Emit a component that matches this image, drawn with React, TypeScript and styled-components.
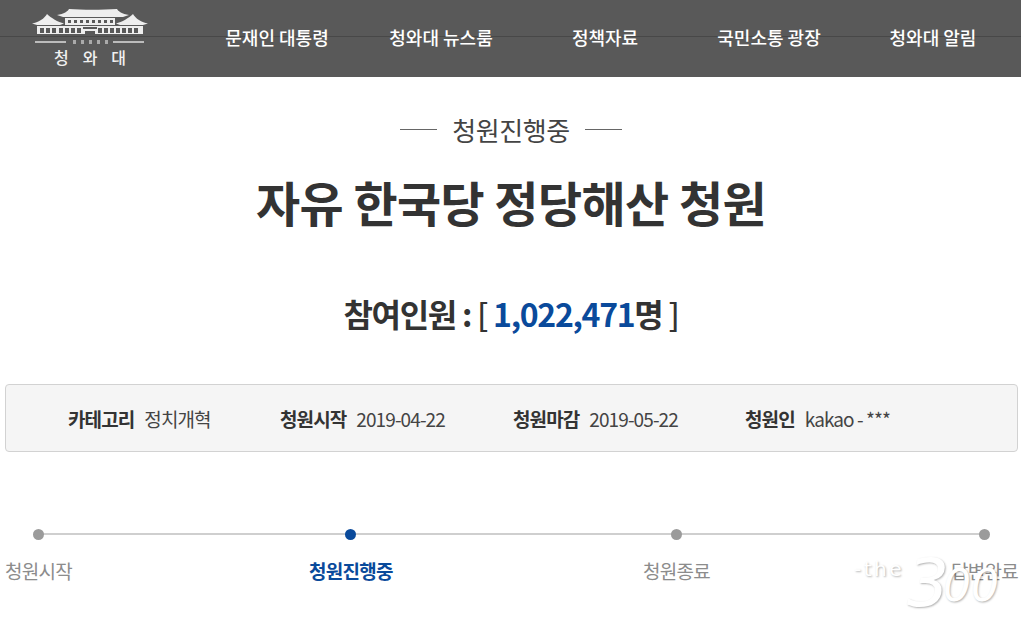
import React from "react";
import styled, { createGlobalStyle } from "styled-components";

const Global = createGlobalStyle`
  html, body { margin: 0; padding: 0; background: #fff; }
  body { font-family: "Noto Sans CJK KR", "Noto Sans", sans-serif; width: 1021px; height: 624px; overflow: hidden; }
`;
const Page = styled.div`position: relative; width: 1021px; height: 624px; overflow: hidden;`;
const Header = styled.header`
  position: relative; height: 77px; background: #595959; display: flex;
`;
const HeaderRule = styled.div`position: absolute; left: 0; right: 0; top: 36px; height: 1px; background: #484848;`;
const LogoBox = styled.div`
  position: relative; width: 195px; flex: none; display: flex; flex-direction: column; align-items: center; padding: 8px 15px 0 0; box-sizing: border-box;
`;
const LogoName = styled.div`
  color: #f0f0f0; font-size: 16px; line-height: 18px; letter-spacing: 14px; margin-right: -14px; font-weight: 500; margin-top: 0;
`;
const Nav = styled.nav`position: relative; display: flex; width: 820px; flex: none;`;
const NavItem = styled.a`
  flex: 1 1 0; text-align: center; color: #fff; font-size: 18px; font-weight: 500; line-height: 75px; white-space: nowrap;
`;
const Status = styled.div`
  display: flex; align-items: center; justify-content: center; gap: 15px; margin-top: 37px; height: 30px; padding-left: 1px;
  color: #444; font-size: 26px; letter-spacing: -0.4px;
`;
const Dash = styled.span`width: 37px; height: 1px; background: #666;`;
const Title = styled.h1`
  margin: 18px 0 0; padding-left: 1px; text-align: center; color: #333; font-size: 48px; line-height: 78px; font-weight: 700; letter-spacing: -0.6px;
`;
const Count = styled.div`
  margin-top: 50px; padding-left: 1px; text-align: center; color: #333; font-size: 32px; line-height: 46px; font-weight: 700; letter-spacing: -1.3px;
`;
const Num = styled.span`color: #0a4a9b;`;
const Plain = styled.span`font-weight: 500;`;
const InfoBox = styled.div`
  margin: 48px 3px 0 5px; height: 68px; box-sizing: border-box; background: #f5f5f5; border: 1px solid #d2d2d2; border-radius: 4px;
  display: flex; align-items: center; padding: 0 0 0 62px;
`;
const Field = styled.div<{ $w: number }>`display: flex; width: ${p => p.$w}px; gap: 10px; font-size: 19px; letter-spacing: -0.9px; color: #444; white-space: nowrap;`;
const FieldLabel = styled.b`font-weight: 700; color: #333;`;
const Steps = styled.div`position: relative; margin-top: 70px; height: 70px;`;
const Track = styled.div`
  margin-left: 33px; width: 957px; height: 25px; display: grid; grid-template-columns: 312px 326px 308px 11px; align-items: center; position: relative;
  &::before { content: ""; position: absolute; left: 5px; right: 5px; top: 11px; height: 2px; background: #cfcfcf; }
`;
const Dot = styled.span<{ $on?: boolean }>`
  position: relative; width: 11px; height: 11px; border-radius: 50%; background: ${p => (p.$on ? "#0a4a9b" : "#9b9b9b")};
`;
const Labels = styled.div`
  margin-top: 11px; padding: 0 3px 0 5px; display: grid; grid-template-columns: 304px 334px 300px 1fr; font-size: 19px; line-height: 26px; letter-spacing: -0.7px; color: #8c8c8c; white-space: nowrap;
`;
const StepLabel = styled.span<{ $on?: boolean; $end?: boolean }>`
  ${p => p.$on && "color:#0a4a9b; font-weight:700;"}
  ${p => p.$end && "text-align:right;"}
`;
const Mark = styled.div`
  position: absolute; left: 854px; top: 548px; width: 165px; height: 70px; color: #fff; font-family: "DejaVu Sans", sans-serif;
  display: flex; align-items: flex-start; text-shadow: 1px 1px 2px rgba(0,0,0,.3); pointer-events: none; white-space: nowrap;
`;
const MarkThe = styled.span`font-size: 20px; line-height: 42px; letter-spacing: 2.5px;`;
const MarkThree = styled.span`font-size: 66px; line-height: 72px; font-style: italic; margin-left: 3px;`;
const MarkZeros = styled.span`font-size: 44px; line-height: 76px; font-style: italic; margin-left: -6px;`;

const Palace = () => (
  <svg width="116" height="27" viewBox="0 0 116 27" fill="none">
    <g fill="#eee">
      <path d="M25 7 C32 6 36 3 37 1 C50 2 70 2 85 1 C86 3 90 6 97 7 L91 9 H31 Z" />
      <path d="M0 15.5 C6 15 13 10 15 6 C19 10 26 14 32 15.5 L28 17 H5 Z" />
      <path d="M84 15.5 C90 14 97 10 101 6 C103 10 110 15 116 15.5 L111 17 H88 Z" />
      <rect x="33" y="10" width="50" height="7" />
      <rect x="5" y="18" width="106" height="8" />
    </g>
    <g fill="#595959">
      {[36, 42, 48, 54, 60, 66, 72, 78].map(x => <rect key={x} x={x} y="12" width="3" height="3" />)}
      {[8, 14, 20, 27, 33, 39, 45, 66, 72, 78, 84, 90, 96, 102].map(x => <rect key={x} x={x} y="20" width="4" height="5" />)}
      <rect x="51" y="19" width="14" height="2" />
      <rect x="53" y="23" width="10" height="3" />
    </g>
  </svg>
);
const LogoLines = () => (
  <svg width="110" height="12" viewBox="0 0 110 12" fill="none" style={{ marginTop: 1 }}>
    <path d="M0 6H31M78 6H109" stroke="#ddd" strokeWidth="1.4" />
    <path d="M38 4h3v4h-3zM46 4h3v4h-3zM54 4h3v4h-3zM62 4h3v4h-3zM70 4h3v4h-3z" fill="#aaa" />
  </svg>
);

export default function App() {
  return (
    <Page>
      <Global />
      <Header>
        <HeaderRule />
        <LogoBox>
          <Palace />
          <LogoLines />
          <LogoName>청와대</LogoName>
        </LogoBox>
        <Nav>
          <NavItem>문재인 대통령</NavItem>
          <NavItem>청와대 뉴스룸</NavItem>
          <NavItem>정책자료</NavItem>
          <NavItem>국민소통 광장</NavItem>
          <NavItem>청와대 알림</NavItem>
        </Nav>
      </Header>
      <Status><Dash />청원진행중<Dash /></Status>
      <Title>자유 한국당 정당해산 청원</Title>
      <Count>참여인원 : <Plain>[</Plain> <Num>1,022,471</Num>명 <Plain>]</Plain></Count>
      <InfoBox>
        <Field $w={212}><FieldLabel>카테고리</FieldLabel>정치개혁</Field>
        <Field $w={233}><FieldLabel>청원시작</FieldLabel>2019-04-22</Field>
        <Field $w={232}><FieldLabel>청원마감</FieldLabel>2019-05-22</Field>
        <Field $w={200}><FieldLabel>청원인</FieldLabel>kakao - ***</Field>
      </InfoBox>
      <Steps>
        <Track><Dot /><Dot $on /><Dot /><Dot /></Track>
        <Labels>
          <StepLabel>청원시작</StepLabel>
          <StepLabel $on>청원진행중</StepLabel>
          <StepLabel>청원종료</StepLabel>
          <StepLabel $end>답변완료</StepLabel>
        </Labels>
      </Steps>
      <Mark><MarkThe>-the</MarkThe><MarkThree>3</MarkThree><MarkZeros>00</MarkZeros></Mark>
    </Page>
  );
}
